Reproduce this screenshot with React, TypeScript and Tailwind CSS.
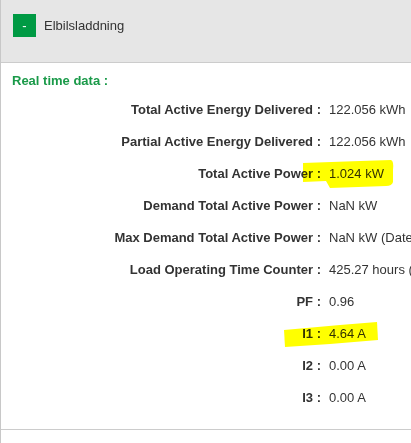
import React from "react";

interface Row {
  label: string;
  value: string;
}

const rows: Row[] = [
  { label: "Total Active Energy Delivered", value: "122.056 kWh" },
  { label: "Partial Active Energy Delivered", value: "122.056 kWh" },
  { label: "Total Active Power", value: "1.024 kW" },
  { label: "Demand Total Active Power", value: "NaN kW" },
  { label: "Max Demand Total Active Power", value: "NaN kW (Date : 01/01/1970 00:00)" },
  { label: "Load Operating Time Counter", value: "425.27 hours (Date : 12/03/2023 10:41)" },
  { label: "PF", value: "0.96" },
  { label: "I1", value: "4.64 A" },
  { label: "I2", value: "0.00 A" },
  { label: "I3", value: "0.00 A" },
];

const App: React.FC = () => {
  return (
    <div className="relative w-[411px] h-[443px] overflow-hidden bg-white text-[13px] text-[#333] font-['Liberation_Sans',Arial,sans-serif]">
      <div className="h-full border-l border-[#c8c8c8]">
        {/* Kopf */}
        <div className="h-[63px] bg-[#e6e6e6] border-b border-[#cccccc] flex items-start pl-[12px] pt-[14px]">
          <div className="w-[23px] h-[23px] bg-[#009a44] flex items-center justify-center text-white text-[13px] leading-none">
            -
          </div>
          <span className="ml-[8px] h-[23px] flex items-center text-[13px] text-[#333]">
            Elbilsladdning
          </span>
        </div>

        {/* Inhalt */}
        <div className="pl-[11px] pt-[8px] pb-[15px] border-b border-[#cccccc]">
          <div className="h-[20px] leading-[20px] font-bold text-[#1a9a49]">Real time data :</div>
          <div className="mt-[3px] flex flex-col">
            {rows.map((row, index) => (
              <div key={index} className="h-[32px] flex items-center whitespace-nowrap">
                <div className="w-[309px] shrink-0 text-right font-bold">{row.label} :</div>
                <div className="pl-[8px]">{row.value}</div>
              </div>
            ))}
          </div>
        </div>
      </div>

      {/* Textmarker */}
      <svg className="absolute left-0 top-0 pointer-events-none mix-blend-multiply" width="411" height="443">
        <path
          d="M303 163 L360 161 L391 160 Q394 161 393 170 L393 182 Q392 186 386 186 L330 188 L326 181 L303 182 Z"
          fill="#ffff00"
        />
        <path d="M284 330 L340 325 L377 322 L378 340 L330 344 L285 347 Z" fill="#ffff00" />
      </svg>
    </div>
  );
};

export default App;
